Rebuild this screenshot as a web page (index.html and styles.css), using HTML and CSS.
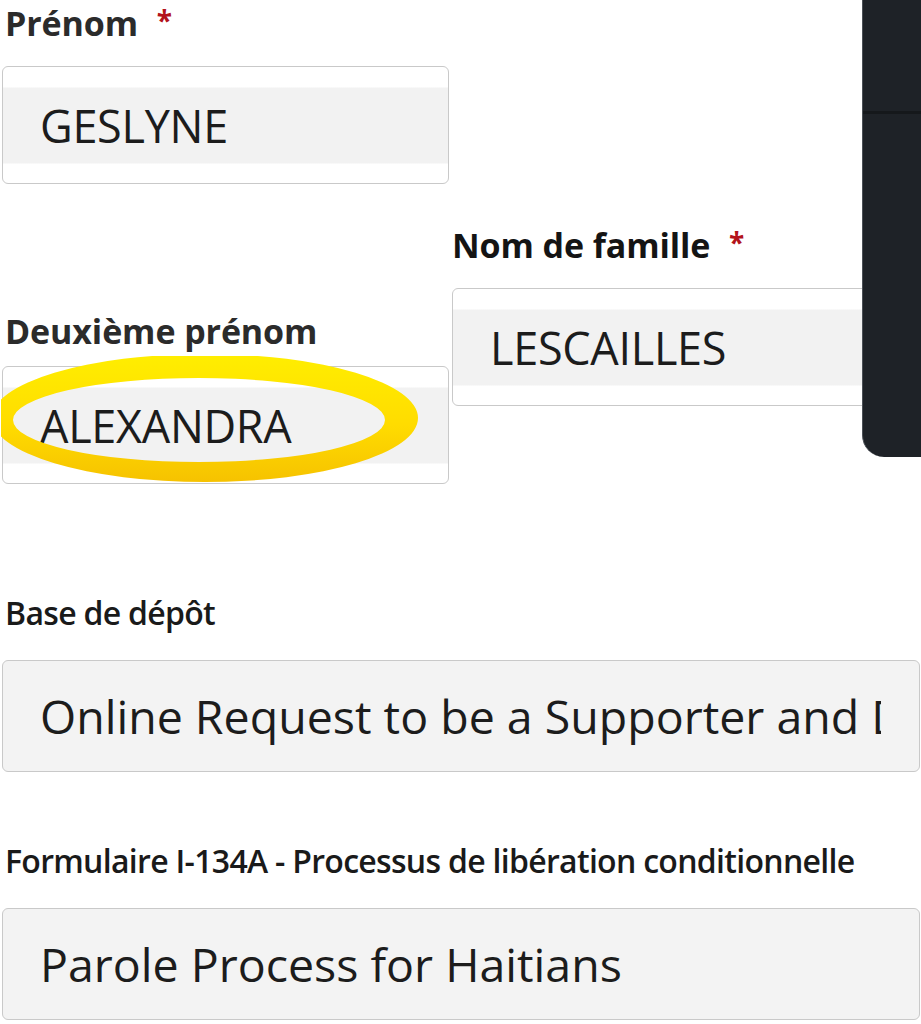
FILE: index.html
```html
<!DOCTYPE html>
<html lang="fr">
<head>
<meta charset="utf-8">
<title>Formulaire</title>
<link rel="stylesheet" href="styles.css">
</head>
<body>
<div class="page">
  <div class="top">
    <div class="col col-left">
      <div class="field">
        <div class="label label-lg">Prénom <span class="req">*</span></div>
        <div class="input input-band"><span class="value">GESLYNE</span></div>
      </div>
      <div class="field field-middle">
        <div class="label label-lg">Deuxième prénom</div>
        <div class="input input-band ringed">
          <span class="value">ALEXANDRA</span>
          <svg class="ring" width="440" height="140" viewBox="0 0 440 140">
            <defs>
              <linearGradient id="yg" x1="0" y1="0" x2="0" y2="1">
                <stop offset="0" stop-color="#ffee00"/>
                <stop offset="0.55" stop-color="#ffdc00"/>
                <stop offset="1" stop-color="#f6c200"/>
              </linearGradient>
            </defs>
            <path fill="url(#yg)" fill-rule="evenodd" d="M -9 62 A 213 64 0 1 0 417 62 A 213 64 0 1 0 -9 62 Z M 12 64 A 186 42 0 1 0 384 64 A 186 42 0 1 0 12 64 Z"/>
          </svg>
        </div>
      </div>
    </div>
    <div class="col col-right">
      <div class="field">
        <div class="label label-lg label-dark">Nom de famille <span class="req">*</span></div>
        <div class="input input-band input-wide"><span class="value">LESCAILLES</span></div>
      </div>
    </div>
    <div class="panel"><div class="panel-line"></div></div>
  </div>

  <div class="field field-full first-full">
    <div class="label label-sm">Base de dépôt</div>
    <div class="input input-flat"><span class="value value-long">Online Request to be a Supporter and Declaration of Financial Support</span></div>
  </div>

  <div class="field field-full second-full">
    <div class="label label-sm">Formulaire I-134A - Processus de libération conditionnelle</div>
    <div class="input input-flat"><span class="value value-long">Parole Process for Haitians</span></div>
  </div>
</div>
</body>
</html>
```
FILE: styles.css
```css
* { box-sizing: border-box; }
html, body {
  margin: 0;
  padding: 0;
  background: #ffffff;
}
body {
  font-family: "Open Sans", "Noto Sans", sans-serif;
  color: #1a1a1a;
  width: 921px;
  height: 1024px;
  overflow: hidden;
}
.page {
  position: relative;
  padding-left: 2px;
}
.top {
  position: relative;
  display: flex;
  gap: 3px;
  height: 485px;
}
.col-left {
  width: 447px;
  flex: none;
}
.col-right {
  flex: 1;
  padding-top: 222px;
  overflow: hidden;
}
.label {
  padding-left: 3px;
  white-space: nowrap;
}
.col-right .label { padding-left: 0; }
.label-lg {
  height: 46px;
  font-size: 34px;
  font-weight: 700;
  line-height: 46px;
  color: #2b2b2b;
  margin-bottom: 20px;
  letter-spacing: -0.1px;
}
.label-dark { color: #141414; }
.req {
  position: relative;
  top: -5px;
  color: #b3131b;
  font-size: 28px;
  margin-left: 10px;
}
.field-middle { margin-top: 124px; }
.field-middle .label-lg { margin-bottom: 12px; }

.input {
  position: relative;
  display: flex;
  align-items: center;
  border: 1.5px solid #c9c9c9;
  border-radius: 6px;
  overflow: hidden;
  white-space: nowrap;
}
.input-band {
  height: 118px;
  padding-left: 37px;
  background: linear-gradient(to bottom, #ffffff 0, #ffffff 20px, #f2f2f2 21px, #f2f2f2 96px, #ffffff 97px);
}
.input-wide { width: 440px; }
.value {
  font-size: 45px;
  font-weight: 400;
  letter-spacing: -0.3px;
  color: #1c1c1c;
}
.ringed { overflow: visible; }
.ring {
  position: absolute;
  left: -2px;
  top: -11px;
  pointer-events: none;
}

.panel {
  position: absolute;
  top: 0;
  right: 0;
  width: 59px;
  height: 457px;
  background: #1e2227;
  border-left: 1px solid #4b5056;
  border-bottom-left-radius: 22px;
  z-index: 2;
}
.panel-line {
  margin-top: 111px;
  height: 3px;
  background: #15181b;
}

.field-full { margin-right: 1px; }
.first-full { margin-top: 107px; }
.second-full { margin-top: 68px; }
.label-sm {
  height: 42px;
  font-size: 32px;
  font-weight: 600;
  line-height: 42px;
  letter-spacing: -0.7px;
  color: #1a1a1a;
  margin-bottom: 26px;
}
.first-full .label-sm { margin-bottom: 26px; }
.input-flat {
  height: 112px;
  padding: 0 38px 0 37px;
  background: #f3f3f3;
}
.value-long {
  display: block;
  overflow: hidden;
  font-size: 46.5px;
  letter-spacing: 0;
}
```
